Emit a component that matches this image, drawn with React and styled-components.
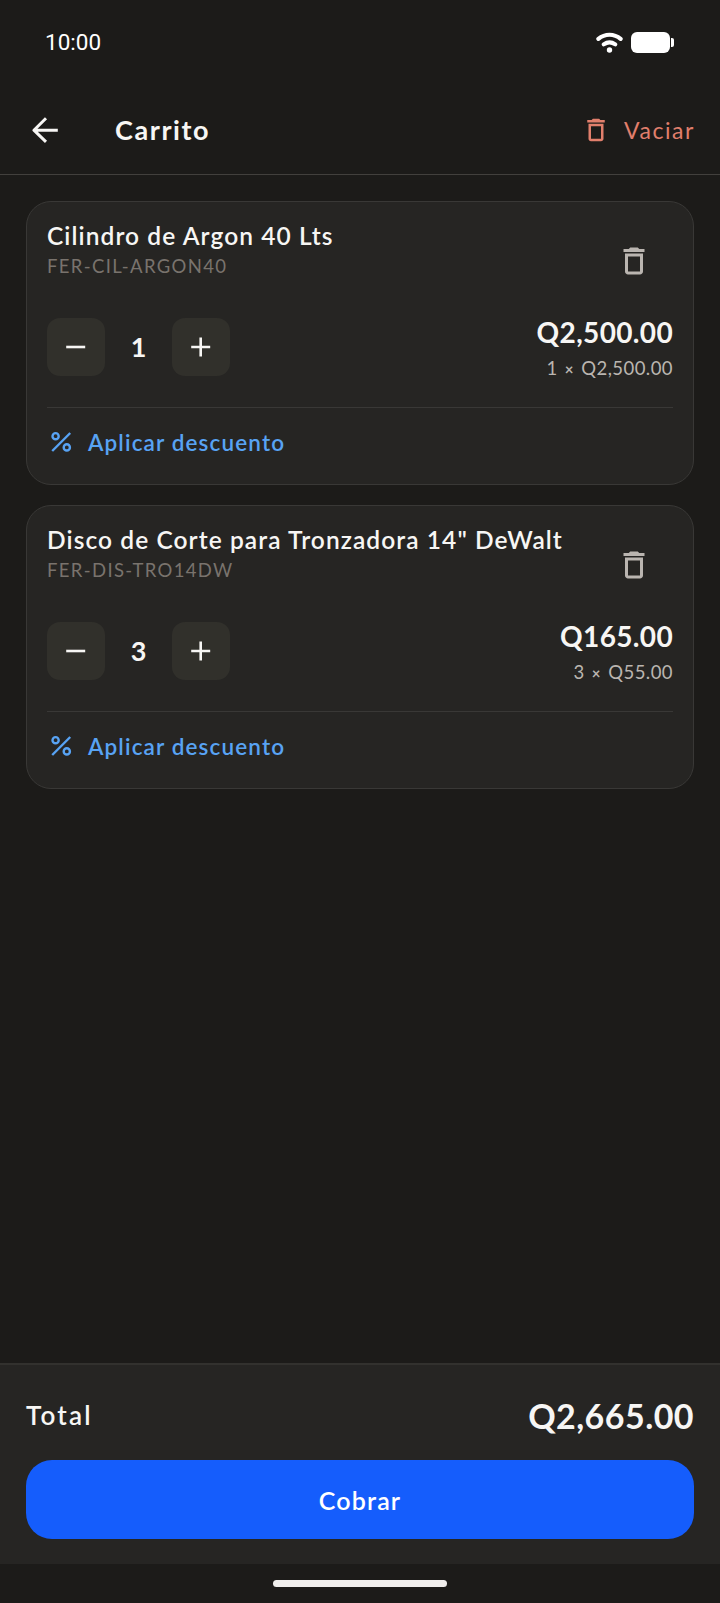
import styled, { createGlobalStyle } from "styled-components";
import { MdDeleteOutline } from "react-icons/md";

const items = [
  {
    name: "Cilindro de Argon 40 Lts",
    sku: "FER-CIL-ARGON40",
    qty: 1,
    price: "Q2,500.00",
    total: "Q2,500.00",
  },
  {
    name: 'Disco de Corte para Tronzadora 14" DeWalt',
    sku: "FER-DIS-TRO14DW",
    qty: 3,
    price: "Q55.00",
    total: "Q165.00",
  },
];

function WifiIcon() {
  return (
    <svg width="27" height="21" viewBox="0 0 27 21" fill="none">
      <path
        d="M2.4 6.8C9 1.4 18 1.4 24.6 6.8"
        stroke="#fff"
        strokeWidth="4.2"
        strokeLinecap="round"
      />
      <path
        d="M7.7 12.4C11.2 10 15.8 10 19.3 12.4"
        stroke="#fff"
        strokeWidth="4.1"
        strokeLinecap="round"
      />
      <circle cx="13.5" cy="18" r="2.7" fill="#fff" />
    </svg>
  );
}

function BackIcon() {
  return (
    <svg
      width="28"
      height="28"
      viewBox="0 0 28 28"
      fill="none"
      stroke="currentColor"
      strokeWidth="3"
      strokeLinejoin="round"
    >
      <path d="M15 2.3L2.9 14.2l12.1 11.7M3.2 14.2h23.6" />
    </svg>
  );
}

function PercentIcon() {
  return (
    <svg
      width="22"
      height="22"
      viewBox="0 0 22 22"
      fill="none"
      stroke="currentColor"
      strokeWidth="2.4"
    >
      <circle cx="4.6" cy="5.2" r="3.1" />
      <circle cx="15.8" cy="16.4" r="3.1" />
      <path d="M1.2 20L19.2 2" />
    </svg>
  );
}

function StepIcon({ plus }) {
  return (
    <svg
      width="20"
      height="20"
      viewBox="0 0 20 20"
      stroke="currentColor"
      strokeWidth="2.6"
    >
      <path d={plus ? "M.2 10h19M9.7 .5v19" : "M.2 10h19"} />
    </svg>
  );
}

function CartItem({ item }) {
  return (
    <Card>
      <CardHead>
        <div>
          <ItemName>{item.name}</ItemName>
          <Sku>{item.sku}</Sku>
        </div>
        <RemoveButton>
          <MdDeleteOutline size={36} />
        </RemoveButton>
      </CardHead>
      <CardRow>
        <Stepper>
          <StepButton>
            <StepIcon />
          </StepButton>
          <Qty>{item.qty}</Qty>
          <StepButton>
            <StepIcon plus />
          </StepButton>
        </Stepper>
        <Prices>
          <ItemTotal>{item.total}</ItemTotal>
          <UnitPrice>
            {item.qty} <Times>×</Times> {item.price}
          </UnitPrice>
        </Prices>
      </CardRow>
      <DiscountButton>
        <PercentIcon />
        Aplicar descuento
      </DiscountButton>
    </Card>
  );
}

function App() {
  return (
    <Screen>
      <GlobalStyle />
      <StatusBar>
        <Clock>10:00</Clock>
        <StatusIcons>
          <WifiIcon />
          <Battery />
          <BatteryTip />
        </StatusIcons>
      </StatusBar>
      <Header>
        <BackButton>
          <BackIcon />
        </BackButton>
        <Title>Carrito</Title>
        <ClearButton>
          <MdDeleteOutline size={30} />
          <span>Vaciar</span>
        </ClearButton>
      </Header>
      <List>
        {items.map((item) => (
          <CartItem key={item.sku} item={item} />
        ))}
      </List>
      <Footer>
        <TotalRow>
          <TotalLabel>Total</TotalLabel>
          <TotalAmount>Q2,665.00</TotalAmount>
        </TotalRow>
        <PayButton>Cobrar</PayButton>
      </Footer>
      <NavBar>
        <HomeIndicator />
      </NavBar>
    </Screen>
  );
}

export default App;

const GlobalStyle = createGlobalStyle`
  * {
    box-sizing: border-box;
    margin: 0;
    padding: 0;
  }
  :root {
    --color-background: #1c1b19;
    --color-card: #262523;
    --color-raised: #31302b;
    --color-border: #393836;
    --color-text: #f7f6f4;
    --color-muted: #bab5b0;
    --color-faint: #79736d;
    --color-link: #58a3f4;
    --color-danger: #e17f6c;
    --color-primary: #155dfc;
  }
  body {
    background-color: var(--color-background);
    color: var(--color-text);
    font-family: Lato, "Open Sans", sans-serif;
  }
  button {
    border: none;
    background: none;
    color: inherit;
    font: inherit;
    cursor: pointer;
  }
  svg {
    display: block;
    flex-shrink: 0;
  }
`;

const Screen = styled.div`
  display: flex;
  flex-direction: column;
  min-height: 100vh;
`;

const StatusBar = styled.div`
  display: flex;
  align-items: center;
  justify-content: space-between;
  height: 84px;
  padding: 0 46px 0 45px;
`;

const Clock = styled.span`
  font-family: Roboto, sans-serif;
  font-size: 22.5px;
  line-height: 28px;
  color: #fff;
`;

const StatusIcons = styled.div`
  display: flex;
  align-items: center;
`;

const Battery = styled.span`
  width: 39px;
  height: 21px;
  margin-left: 8px;
  border-radius: 6px;
  background-color: #fff;
`;

const BatteryTip = styled.span`
  width: 3px;
  height: 9px;
  margin-left: 1px;
  border-radius: 0 2px 2px 0;
  background-color: #fff;
`;

const Header = styled.header`
  display: flex;
  align-items: center;
  height: 91px;
  padding: 2px 26px 0 31px;
  border-bottom: 1px solid #42403d;
`;

const BackButton = styled.button`
  width: 84px;
`;

const Title = styled.h1`
  flex: 1;
  font-size: 27px;
  font-weight: 700;
  line-height: 32px;
  letter-spacing: 1.6px;
`;

const ClearButton = styled.button`
  display: flex;
  align-items: center;
  gap: 13px;
  color: var(--color-danger);
  font-size: 23px;
  line-height: 28px;
  letter-spacing: 1.55px;
  margin-right: -1px;
`;

const List = styled.main`
  flex: 1;
  display: flex;
  flex-direction: column;
  gap: 20px;
  padding: 26px 26px 0;
`;

const Card = styled.article`
  padding: 19px 20px 8px;
  border: 1px solid var(--color-border);
  border-radius: 25px;
  background-color: var(--color-card);
`;

const CardHead = styled.div`
  display: flex;
  justify-content: space-between;
  height: 80px;
`;

const ItemName = styled.h2`
  font-size: 24.5px;
  font-weight: 600;
  line-height: 30px;
  letter-spacing: 1.08px;
`;

const Sku = styled.p`
  margin-top: 3px;
  color: var(--color-faint);
  font-size: 18.5px;
  line-height: 24px;
  letter-spacing: 1.35px;
`;

const RemoveButton = styled.button`
  display: flex;
  align-items: center;
  justify-content: center;
  width: 78px;
  color: var(--color-muted);
`;

const CardRow = styled.div`
  display: flex;
  align-items: center;
  justify-content: space-between;
  height: 64px;
  margin: 14px 0 28px;
`;

const Stepper = styled.div`
  display: flex;
  align-items: center;
`;

const StepButton = styled.button`
  display: flex;
  align-items: center;
  justify-content: center;
  width: 58px;
  height: 58px;
  border-radius: 13px;
  background-color: var(--color-raised);
`;

const Qty = styled.span`
  width: 67px;
  font-size: 27px;
  font-weight: 700;
  line-height: 32px;
  text-align: center;
`;

const Prices = styled.div`
  text-align: right;
`;

const ItemTotal = styled.p`
  font-size: 28px;
  font-weight: 700;
  line-height: 34px;
  letter-spacing: 0.35px;
`;

const UnitPrice = styled.p`
  margin-top: 8px;
  color: var(--color-muted);
  font-size: 18.5px;
  line-height: 22px;
  letter-spacing: 0.45px;
`;

const Times = styled.span`
  margin: 0 2px;
  font-size: 15px;
  font-weight: 700;
  line-height: 1;
`;

const DiscountButton = styled.button`
  display: flex;
  align-items: center;
  gap: 15px;
  width: 100%;
  height: 69px;
  padding-left: 4px;
  border-top: 1px solid var(--color-border);
  color: var(--color-link);
  font-size: 22.5px;
  font-weight: 600;
  letter-spacing: 1.13px;
`;

const Footer = styled.footer`
  padding: 29px 26px 25px;
  border-top: 2px solid #32312e;
  background-color: var(--color-card);
`;

const TotalRow = styled.div`
  display: flex;
  align-items: center;
  justify-content: space-between;
  height: 42px;
  margin-bottom: 24px;
`;

const TotalLabel = styled.span`
  font-size: 26px;
  font-weight: 600;
  letter-spacing: 2.2px;
`;

const TotalAmount = styled.span`
  font-size: 34px;
  font-weight: 700;
  letter-spacing: 0.45px;
`;

const PayButton = styled.button`
  width: 100%;
  height: 79px;
  border-radius: 26px;
  background-color: var(--color-primary);
  color: #fff;
  font-size: 25px;
  font-weight: 600;
  letter-spacing: 1.15px;
`;

const NavBar = styled.div`
  display: flex;
  align-items: center;
  justify-content: center;
  height: 39px;
`;

const HomeIndicator = styled.span`
  width: 174px;
  height: 7px;
  border-radius: 4px;
  background-color: #f0eeec;
`;
